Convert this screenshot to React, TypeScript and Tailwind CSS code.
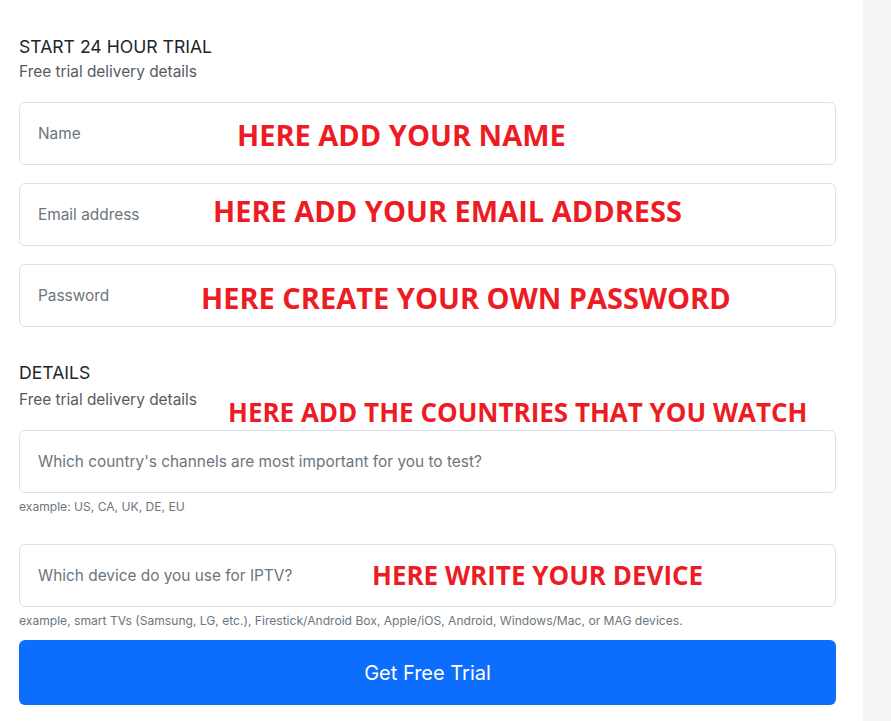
import React from "react";

const inter = { fontFamily: "Inter, 'Noto Sans', sans-serif" };

function Field({ placeholder }: { placeholder: string }) {
    return (
        <div className="flex h-[63px] items-center rounded-[6px] border border-[#dee2e6] bg-white px-[18px] text-[15.4px] text-[#6c757d]">
            {placeholder}
        </div>
    );
}

function Note({ text, className }: { text: string; className: string }) {
    return (
        <div
            className={`absolute whitespace-nowrap font-bold leading-none text-[#ed1c24] ${className}`}
            style={{ fontFamily: "'Open Sans', 'Noto Sans', sans-serif" }}>
            {text}
        </div>
    );
}

export default function App() {
    return (
        <div className="relative flex min-h-[721px] bg-white" style={inter}>
            <div className="w-[863px] pl-[19px] pr-[27px] pt-[35px]">
                {/* Trial account */}
                <div className="text-[17.6px] leading-[24px] text-[#212529]">START 24 HOUR TRIAL</div>
                <div className="mt-[2px] text-[15.4px] leading-[22px] text-[#555b61]">Free trial delivery details</div>

                <div className="mt-[19px] flex flex-col gap-[18px]">
                    <Field placeholder="Name" />
                    <Field placeholder="Email address" />
                    <Field placeholder="Password" />
                </div>

                {/* Details */}
                <div className="mt-[34px] text-[17.6px] leading-[24px] text-[#212529]">DETAILS</div>
                <div className="mt-[4px] text-[15.4px] leading-[22px] text-[#555b61]">Free trial delivery details</div>

                <div className="mt-[19px]">
                    <Field placeholder="Which country's channels are most important for you to test?" />
                    <div className="mt-[6px] text-[12.1px] leading-[16px] text-[#6c757d]">example: US, CA, UK, DE, EU</div>
                </div>

                <div className="mt-[29px]">
                    <Field placeholder="Which device do you use for IPTV?" />
                    <div className="mt-[6px] text-[12.1px] leading-[16px] text-[#6c757d]">
                        example, smart TVs (Samsung, LG, etc.), Firestick/Android Box, Apple/iOS, Android, Windows/Mac, or MAG devices.
                    </div>
                </div>

                <button className="mt-[11px] flex h-[65px] w-full items-center justify-center rounded-[6px] bg-[#0d6efd] text-[20px] text-white">
                    Get Free Trial
                </button>
            </div>

            <div className="flex-1 bg-[#f5f5f5]" />

            <Note text="HERE ADD YOUR NAME" className="left-[237px] top-[120px] text-[29px]" />
            <Note text="HERE ADD YOUR EMAIL ADDRESS" className="left-[213px] top-[196px] text-[29px]" />
            <Note text="HERE CREATE YOUR OWN PASSWORD" className="left-[201px] top-[283px] text-[29px]" />
            <Note text="HERE ADD THE COUNTRIES THAT YOU WATCH" className="left-[228px] top-[399px] text-[26px]" />
            <Note text="HERE WRITE YOUR DEVICE" className="left-[372px] top-[562px] text-[26px]" />
        </div>
    );
}
